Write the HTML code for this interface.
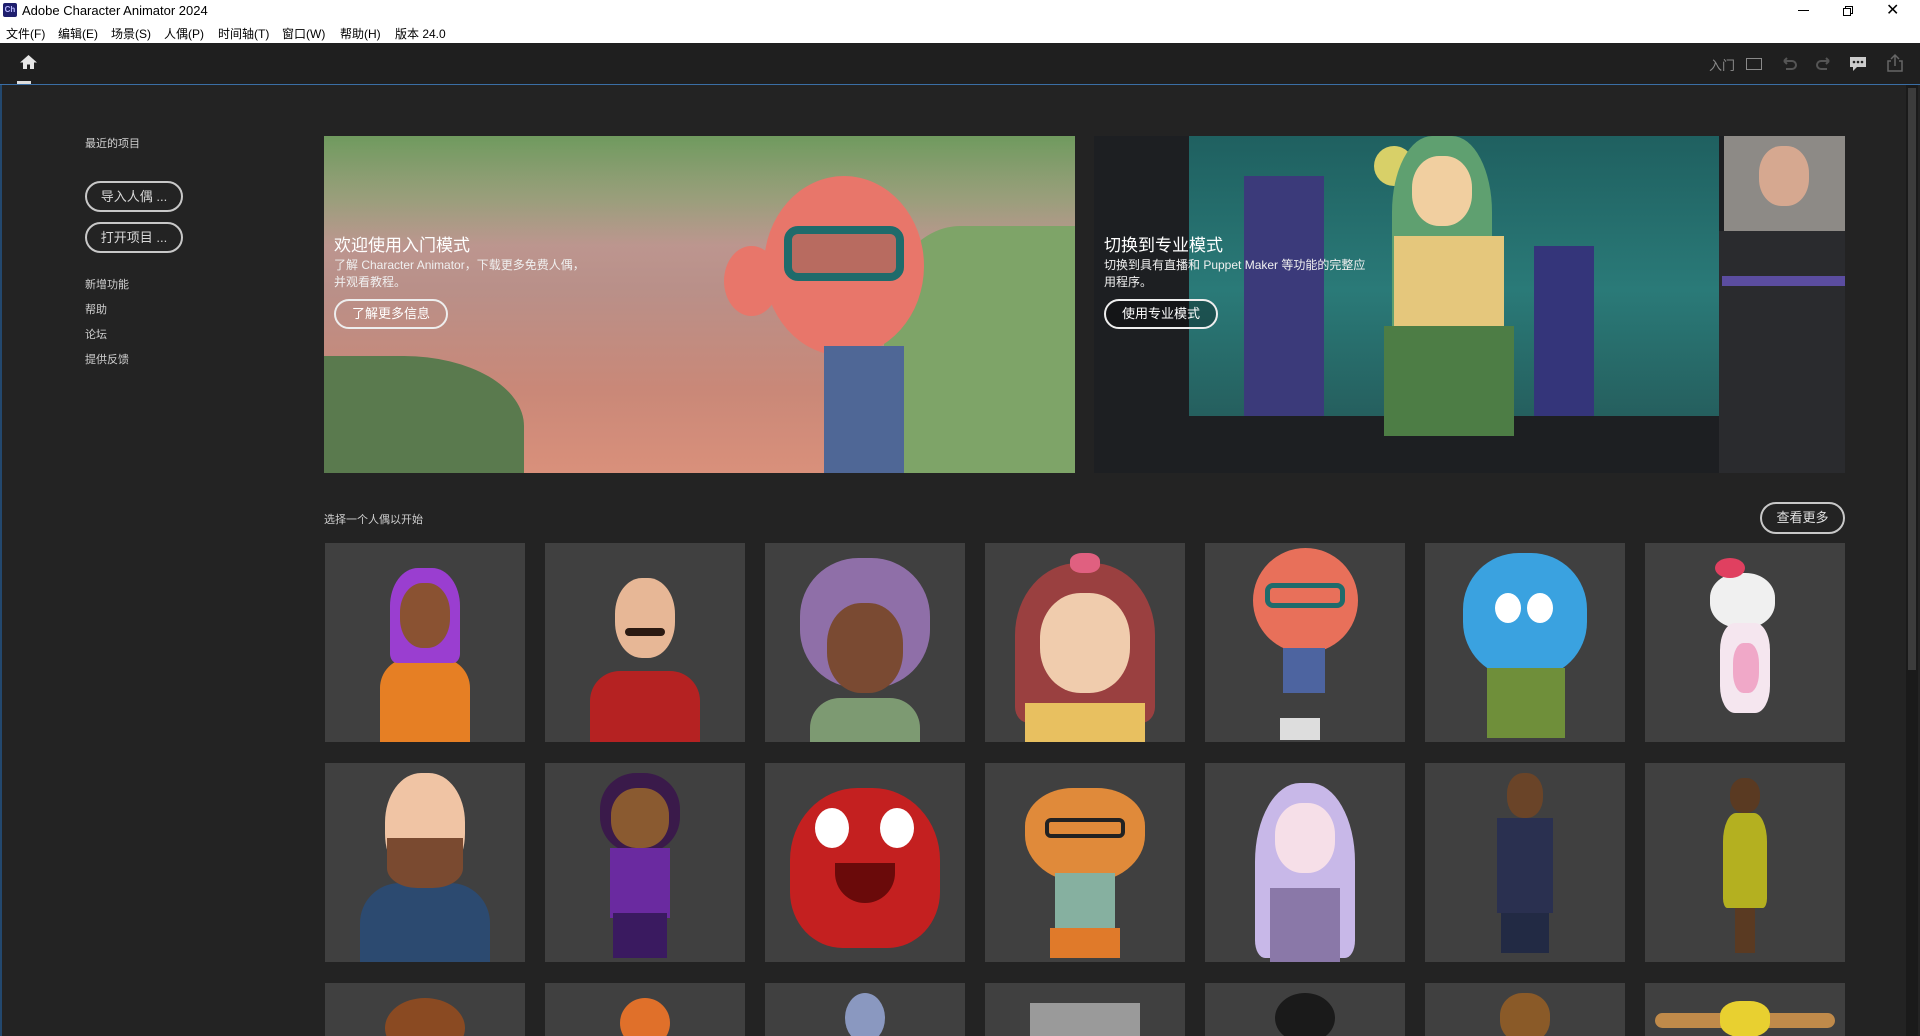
<!DOCTYPE html>
<html><head><meta charset="utf-8">
<style>
*{margin:0;padding:0;box-sizing:border-box}
html,body{width:1920px;height:1036px;overflow:hidden}
body{background:#232323;font-family:"Liberation Sans","Noto Sans CJK SC",sans-serif}
#wrap{position:relative;width:1920px;height:1036px;overflow:hidden;background:#232323}
.abs{position:absolute}
#title{left:0;top:0;width:1920px;height:43px;background:#fff;color:#000}
#title .t{left:22px;top:3px;font-size:13px}
#title .logo{left:3px;top:3px;width:14px;height:14px;background:#1f1f6e;border-radius:2px;color:#b9b9ff;font-size:8px;text-align:center;line-height:14px;font-weight:bold}
#title .m{top:25px;font-size:12px}
#tb{left:0;top:43px;width:1920px;height:41px;background:#1f1f1f}
#line{left:0;top:84px;width:1920px;height:1px;background:#3a6ea5}
#main{left:0;top:85px;width:1906px;height:951px;background:#232323;border-left:2px solid #23486e}
.lt{color:#d0d0d0;font-size:11px;left:85px}
.pill{border:2px solid #c8c8c8;border-radius:16px;color:#d8d8d8;font-size:13px;text-align:center}
.tile{width:200px;height:199px;background:#404040;overflow:hidden}
.r3{height:53px}
.tile div{position:absolute}
</style></head><body><div id="wrap">
<div id="title" class="abs">
 <div class="abs logo">Ch</div>
 <div class="abs t">Adobe Character Animator 2024</div>
 <div class="abs m" style="left:6px">文件(F)</div>
 <div class="abs m" style="left:58px">编辑(E)</div>
 <div class="abs m" style="left:111px">场景(S)</div>
 <div class="abs m" style="left:164px">人偶(P)</div>
 <div class="abs m" style="left:218px">时间轴(T)</div>
 <div class="abs m" style="left:282px">窗口(W)</div>
 <div class="abs m" style="left:340px">帮助(H)</div>
 <div class="abs m" style="left:395px">版本 24.0</div>
 <div class="abs" style="left:1798px;top:10px;width:11px;height:1px;background:#000"></div>
 <div class="abs" style="left:1845px;top:6px;width:8px;height:8px;border:1px solid #000"></div>
 <div class="abs" style="left:1843px;top:8px;width:8px;height:8px;border:1px solid #000;background:#fff"></div>
 <div class="abs" style="left:1886px;top:0px;font-size:16px">✕</div>
</div>
<div id="tb" class="abs">
 <svg class="abs" style="left:19px;top:11px" width="19" height="16" viewBox="0 0 19 16"><path d="M9.5 1 L18 8.5 H15 V15 H11 V10.5 H8 V15 H4 V8.5 H1 Z" fill="#e6e6e6"/></svg>
 <div class="abs" style="left:17px;top:38px;width:14px;height:3px;background:#ddd"></div>
 <div class="abs" style="left:1709px;top:12px;font-size:13px;color:#8a8a8a">入门</div>
 <div class="abs" style="left:1746px;top:15px;width:16px;height:12px;border:1.5px solid #8a8a8a"></div>
 <svg class="abs" style="left:1780px;top:12px" width="18" height="18"><path d="M4 6 H12 A4 4 0 0 1 12 14 H6 M4 6 L7 3 M4 6 L7 9" stroke="#555" stroke-width="2" fill="none"/></svg>
 <svg class="abs" style="left:1815px;top:12px" width="18" height="18"><path d="M14 6 H6 A4 4 0 0 0 6 14 H12 M14 6 L11 3 M14 6 L11 9" stroke="#555" stroke-width="2" fill="none"/></svg>
 <svg class="abs" style="left:1849px;top:12px" width="18" height="18"><path d="M1 2 H17 V12 H8 L4 16 V12 H1 Z" fill="#ccc"/><circle cx="5" cy="7" r="1.3" fill="#222"/><circle cx="9" cy="7" r="1.3" fill="#222"/><circle cx="13" cy="7" r="1.3" fill="#222"/></svg>
 <svg class="abs" style="left:1886px;top:10px" width="18" height="20"><path d="M5 8 H2 V18 H16 V8 H13 M9 13 V2 M5 6 L9 2 L13 6" stroke="#666" stroke-width="1.5" fill="none"/></svg>
</div>
<div id="line" class="abs"></div>
<div id="main" class="abs"></div>
<div class="abs" style="left:1906px;top:85px;width:12px;height:951px;background:#1a1a1a"></div>
<div class="abs" style="left:1908px;top:88px;width:8px;height:582px;background:#3c3c3c"></div>

<div class="abs lt" style="top:135px">最近的项目</div>
<div class="abs pill" style="left:85px;top:181px;width:98px;height:31px;line-height:27px">导入人偶 ...</div>
<div class="abs pill" style="left:85px;top:222px;width:98px;height:31px;line-height:27px">打开项目 ...</div>
<div class="abs lt" style="top:276px">新增功能</div>
<div class="abs lt" style="top:301px">帮助</div>
<div class="abs lt" style="top:326px">论坛</div>
<div class="abs lt" style="top:351px">提供反馈</div>

<div class="abs" style="left:324px;top:136px;width:751px;height:337px;overflow:hidden;background:linear-gradient(180deg,#c6a49e 0%,#b99089 45%,#c98878 75%,#d9907b 100%)">
 <div class="abs" style="left:0;top:0;width:751px;height:110px;background:linear-gradient(180deg,#6f9a5e 0%,rgba(120,160,100,.5) 60%,rgba(0,0,0,0) 100%)"></div>
 <div class="abs" style="left:0;top:220px;width:200px;height:117px;background:#5a7a4e;border-radius:0 60% 0 0"></div>
 <div class="abs" style="left:560px;top:90px;width:191px;height:247px;background:#7ea468;border-radius:40% 0 0 0"></div>
 <div class="abs" style="left:440px;top:40px;width:160px;height:180px;background:#e8766a;border-radius:50%"></div>
 <div class="abs" style="left:460px;top:90px;width:120px;height:55px;border:8px solid #1f6b6b;border-radius:14px;background:#b86b60"></div>
 <div class="abs" style="left:500px;top:210px;width:80px;height:127px;background:#4f6796"></div>
 <div class="abs" style="left:400px;top:110px;width:55px;height:70px;background:#e8766a;border-radius:50%"></div>
 <div class="abs" style="left:10px;top:95px;color:#fff;font-size:17px">欢迎使用入门模式</div>
 <div class="abs" style="left:10px;top:121px;color:#f0f0f0;font-size:12px;line-height:17px;width:262px">了解 Character Animator，下载更多免费人偶，并观看教程。</div>
 <div class="abs pill" style="left:10px;top:163px;width:114px;height:30px;line-height:26px;border-color:#eee;color:#fff">了解更多信息</div>
</div>
<div class="abs" style="left:1094px;top:136px;width:751px;height:337px;overflow:hidden;background:#1d1f22">
 <div class="abs" style="left:95px;top:0;width:530px;height:280px;background:linear-gradient(180deg,#1f6060 0%,#2a7a78 55%,#255f5e 100%)"></div>
 <div class="abs" style="left:150px;top:40px;width:80px;height:240px;background:#3b3a7a"></div>
 <div class="abs" style="left:440px;top:110px;width:60px;height:170px;background:#34357a"></div>
 <div class="abs" style="left:280px;top:10px;width:40px;height:40px;background:#d8d068;border-radius:50%"></div>
 <div class="abs" style="left:298px;top:0;width:100px;height:190px;background:#5fa070;border-radius:40% 40% 0 0"></div>
 <div class="abs" style="left:318px;top:20px;width:60px;height:70px;background:#f1cfa0;border-radius:45%"></div>
 <div class="abs" style="left:300px;top:100px;width:110px;height:90px;background:#e5c77c"></div>
 <div class="abs" style="left:290px;top:190px;width:130px;height:110px;background:#4d7d45"></div>
 <div class="abs" style="left:630px;top:0;width:121px;height:95px;background:#8d8a86"></div>
 <div class="abs" style="left:665px;top:10px;width:50px;height:60px;background:#d6a890;border-radius:45%"></div>
 <div class="abs" style="left:625px;top:95px;width:126px;height:242px;background:#2a2b2e"></div>
 <div class="abs" style="left:628px;top:140px;width:123px;height:10px;background:#5b4da0"></div>
 <div class="abs" style="left:10px;top:95px;color:#fff;font-size:17px">切换到专业模式</div>
 <div class="abs" style="left:10px;top:121px;color:#f0f0f0;font-size:12px;line-height:17px;width:262px">切换到具有直播和 Puppet Maker 等功能的完整应用程序。</div>
 <div class="abs pill" style="left:10px;top:163px;width:114px;height:30px;line-height:26px;border-color:#eee;color:#fff;background:rgba(0,0,0,.3)">使用专业模式</div>
</div>

<div class="abs" style="left:324px;top:511px;color:#cfcfcf;font-size:11px">选择一个人偶以开始</div>
<div class="abs pill" style="left:1760px;top:502px;width:85px;height:32px;line-height:28px;color:#e0e0e0">查看更多</div>

<div class="abs tile" style="left:325px;top:543px"><div style="left:55px;top:115px;width:90px;height:85px;background:#e67f24;border-radius:30px 30px 0 0"></div><div style="left:65px;top:25px;width:70px;height:95px;background:#9a3ed0;border-radius:40% 40% 10% 10%"></div><div style="left:75px;top:40px;width:50px;height:65px;background:#8a5232;border-radius:45%"></div></div>
<div class="abs tile" style="left:545px;top:543px"><div style="left:45px;top:128px;width:110px;height:71px;background:#b52222;border-radius:30px 30px 0 0"></div><div style="left:70px;top:35px;width:60px;height:80px;background:#e7b796;border-radius:45%"></div><div style="left:80px;top:85px;width:40px;height:8px;background:#2b1a12;border-radius:4px"></div></div>
<div class="abs tile" style="left:765px;top:543px"><div style="left:45px;top:155px;width:110px;height:44px;background:#7d9a72;border-radius:30px 30px 0 0"></div><div style="left:35px;top:15px;width:130px;height:130px;background:#8f6fa8;border-radius:45%"></div><div style="left:62px;top:60px;width:76px;height:90px;background:#7a4a32;border-radius:45%"></div></div>
<div class="abs tile" style="left:985px;top:543px"><div style="left:30px;top:20px;width:140px;height:160px;background:#9a4040;border-radius:45% 45% 10% 10%"></div><div style="left:55px;top:50px;width:90px;height:100px;background:#f0ccad;border-radius:45%"></div><div style="left:40px;top:160px;width:120px;height:39px;background:#e8c060"></div><div style="left:85px;top:10px;width:30px;height:20px;background:#e06080;border-radius:40%"></div></div>
<div class="abs tile" style="left:1205px;top:543px"><div style="left:48px;top:5px;width:105px;height:105px;background:#e8705a;border-radius:50%"></div><div style="left:60px;top:40px;width:80px;height:25px;border:5px solid #1f6b6b;border-radius:8px"></div><div style="left:78px;top:105px;width:42px;height:45px;background:#4d64a0"></div><div style="left:75px;top:175px;width:40px;height:22px;background:#ddd"></div></div>
<div class="abs tile" style="left:1425px;top:543px"><div style="left:38px;top:10px;width:124px;height:125px;background:#3aa2e0;border-radius:45%"></div><div style="left:70px;top:50px;width:26px;height:30px;background:#fff;border-radius:50%"></div><div style="left:102px;top:50px;width:26px;height:30px;background:#fff;border-radius:50%"></div><div style="left:62px;top:125px;width:78px;height:70px;background:#6f8f3a"></div></div>
<div class="abs tile" style="left:1645px;top:543px"><div style="left:65px;top:30px;width:65px;height:55px;background:#f0f0f0;border-radius:45%"></div><div style="left:75px;top:80px;width:50px;height:90px;background:#f5e6ef;border-radius:30%"></div><div style="left:88px;top:100px;width:26px;height:50px;background:#f0a8c8;border-radius:40%"></div><div style="left:70px;top:15px;width:30px;height:20px;background:#e04060;border-radius:50%"></div></div>

<div class="abs tile" style="left:325px;top:763px"><div style="left:35px;top:120px;width:130px;height:79px;background:#2c4a70;border-radius:40px 40px 0 0"></div><div style="left:60px;top:10px;width:80px;height:110px;background:#f0c4a4;border-radius:45%"></div><div style="left:62px;top:75px;width:76px;height:50px;background:#7a4a30;border-radius:0 0 40% 40%"></div></div>
<div class="abs tile" style="left:545px;top:763px"><div style="left:55px;top:10px;width:80px;height:80px;background:#3a1a4a;border-radius:45%"></div><div style="left:66px;top:25px;width:58px;height:60px;background:#8a5a30;border-radius:45%"></div><div style="left:65px;top:85px;width:60px;height:70px;background:#6a2aa0"></div><div style="left:68px;top:150px;width:54px;height:45px;background:#3a1a60"></div></div>
<div class="abs tile" style="left:765px;top:763px"><div style="left:25px;top:25px;width:150px;height:160px;background:#c42020;border-radius:45% 45% 35% 35%"></div><div style="left:50px;top:45px;width:34px;height:40px;background:#fff;border-radius:50%"></div><div style="left:115px;top:45px;width:34px;height:40px;background:#fff;border-radius:50%"></div><div style="left:70px;top:100px;width:60px;height:40px;background:#6a0a0a;border-radius:0 0 30px 30px"></div></div>
<div class="abs tile" style="left:985px;top:763px"><div style="left:40px;top:25px;width:120px;height:95px;background:#e08a3a;border-radius:40% 40% 50% 50%"></div><div style="left:60px;top:55px;width:80px;height:20px;border:4px solid #222;border-radius:6px"></div><div style="left:70px;top:110px;width:60px;height:55px;background:#86b0a0"></div><div style="left:65px;top:165px;width:70px;height:30px;background:#e07a2a"></div></div>
<div class="abs tile" style="left:1205px;top:763px"><div style="left:50px;top:20px;width:100px;height:175px;background:#c8b8e8;border-radius:45% 45% 10% 10%"></div><div style="left:70px;top:40px;width:60px;height:70px;background:#f6dfe8;border-radius:45%"></div><div style="left:65px;top:125px;width:70px;height:74px;background:#8a78a8"></div></div>
<div class="abs tile" style="left:1425px;top:763px"><div style="left:82px;top:10px;width:36px;height:45px;background:#6a4428;border-radius:45%"></div><div style="left:72px;top:55px;width:56px;height:95px;background:#2a3050"></div><div style="left:76px;top:150px;width:48px;height:40px;background:#222a44"></div></div>
<div class="abs tile" style="left:1645px;top:763px"><div style="left:85px;top:15px;width:30px;height:35px;background:#5a3a22;border-radius:45%"></div><div style="left:78px;top:50px;width:44px;height:95px;background:#b4b020;border-radius:30% 30% 10% 10%"></div><div style="left:90px;top:145px;width:20px;height:45px;background:#5a3a22"></div></div>

<div class="abs tile r3" style="left:325px;top:983px"><div style="left:60px;top:15px;width:80px;height:60px;background:#8a4a22;border-radius:50%"></div></div>
<div class="abs tile r3" style="left:545px;top:983px"><div style="left:75px;top:15px;width:50px;height:50px;background:#e0702a;border-radius:50%"></div></div>
<div class="abs tile r3" style="left:765px;top:983px"><div style="left:80px;top:10px;width:40px;height:50px;background:#8a98c0;border-radius:50%"></div></div>
<div class="abs tile r3" style="left:985px;top:983px"><div style="left:45px;top:20px;width:110px;height:40px;background:#9a9a9a"></div></div>
<div class="abs tile r3" style="left:1205px;top:983px"><div style="left:70px;top:10px;width:60px;height:50px;background:#1a1a1a;border-radius:50%"></div></div>
<div class="abs tile r3" style="left:1425px;top:983px"><div style="left:75px;top:10px;width:50px;height:50px;background:#8a5a28;border-radius:45%"></div></div>
<div class="abs tile r3" style="left:1645px;top:983px"><div style="left:10px;top:30px;width:180px;height:15px;background:#c08a4a;border-radius:8px"></div><div style="left:75px;top:18px;width:50px;height:36px;background:#e8d030;border-radius:40%"></div></div>
</div></body></html>
